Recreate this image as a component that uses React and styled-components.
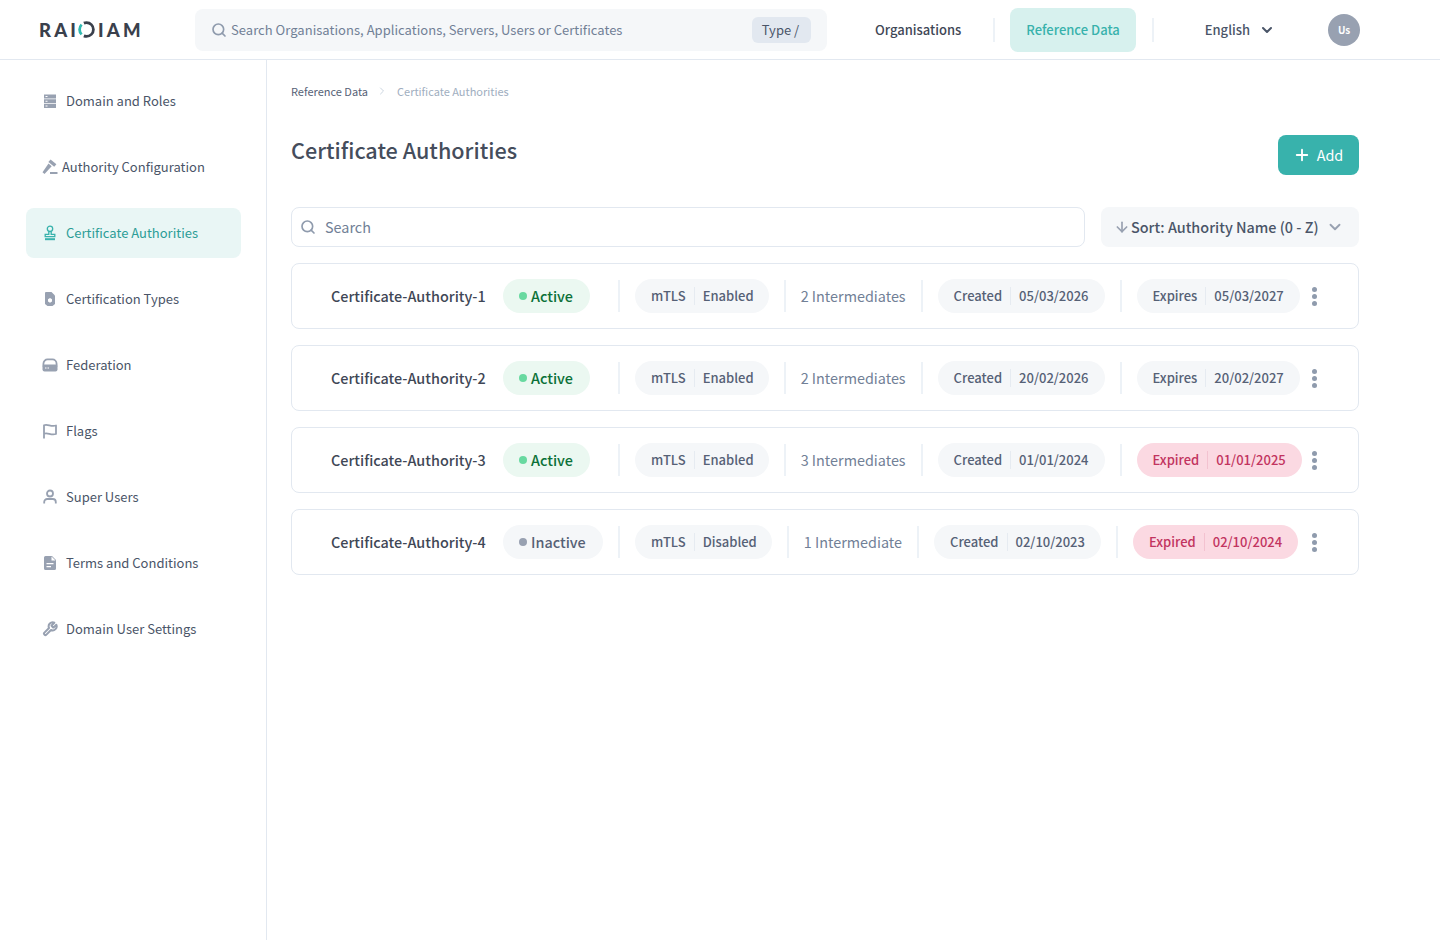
import React from 'react';
import styled, { createGlobalStyle } from 'styled-components';
import { FiSearch, FiChevronDown, FiChevronRight, FiPlus, FiArrowDown, FiTool } from 'react-icons/fi';

const GlobalStyle = createGlobalStyle`
  * { box-sizing: border-box; }
  body {
    margin: 0;
    background: #fff;
    font-family: "Noto Sans CJK SC", "Noto Sans", sans-serif;
    color: #4a5568;
  }
`;

const Page = styled.div`
  height: 940px;
  display: flex;
  flex-direction: column;
`;

const Header = styled.header`
  height: 60px;
  flex: none;
  display: flex;
  align-items: center;
  border-bottom: 1px solid #e2e8f0;
`;

const Logo = styled.div`
  width: 156px;
  margin-left: 39px;
  display: flex;
  align-items: center;
  font-family: Lato, sans-serif;
  font-weight: 900;
  font-size: 18.5px;
  letter-spacing: 3.15px;
  color: #3a404c;
`;

const LogoRing = styled.svg`
  width: 17px;
  height: 17px;
  margin: 0 3px 0 -1px;
`;

const TopSearch = styled.div`
  width: 632px;
  height: 42px;
  border-radius: 8px;
  background: #f5f7f9;
  display: flex;
  align-items: center;
  padding: 0 16px;
  color: #718096;
  font-size: 13px;
  svg { color: #8f9bad; margin-right: 4px; flex: none; }
`;

const TopSearchText = styled.span`
  flex: 1;
  letter-spacing: 0.03px;
`;

const TypeBadge = styled.span`
  height: 26px;
  width: 59px;
  border-radius: 6px;
  background: #e2e8f0;
  display: flex;
  align-items: center;
  justify-content: center;
  padding-right: 2px;
  color: #4a5568;
`;

const TopLink = styled.div`
  height: 44px;
  display: flex;
  align-items: center;
  padding: 0 16px;
  margin-left: ${({ $first }) => ($first ? '32px' : '0')};
  border-radius: 8px;
  font-size: 13px;
  font-weight: 500;
  color: ${({ $active }) => ($active ? '#38b2ac' : '#3f4756')};
  background: ${({ $active }) => ($active ? '#d7f1ee' : 'transparent')};
`;

const TopDivider = styled.div`
  width: 2px;
  height: 24px;
  margin: 0 15px 0 16px;
  background: #edf2f7;
`;

const Language = styled.div`
  margin-left: 36px;
  display: flex;
  align-items: center;
  gap: 9px;
  font-size: 13px;
  font-weight: 500;
  color: #4a5568;
`;

const Avatar = styled.div`
  width: 32px;
  height: 32px;
  margin-left: 53px;
  border-radius: 50%;
  background: #98a1b1;
  color: #fff;
  font-size: 10px;
  font-weight: 700;
  display: flex;
  align-items: center;
  justify-content: center;
`;

const Body = styled.div`
  flex: 1;
  display: flex;
`;

const Sidebar = styled.nav`
  width: 267px;
  flex: none;
  border-right: 1px solid #e2e8f0;
  padding: 16px 25px 0 26px;
  display: flex;
  flex-direction: column;
  gap: 16px;
`;

const NavItem = styled.div`
  height: 50px;
  border-radius: 8px;
  padding: 0 0 1px 16px;
  display: flex;
  align-items: center;
  gap: ${({ $tight }) => ($tight ? '4px' : '8px')};
  font-size: 13px;
  color: ${({ $active }) => ($active ? '#2c9d97' : '#4a5568')};
  background: ${({ $active }) => ($active ? '#e9f6f5' : 'transparent')};
  svg {
    flex: none;
    width: 16px;
    height: 16px;
    color: ${({ $active }) => ($active ? '#38b2ac' : '#98a1b1')};
  }
`;

const Main = styled.main`
  flex: 1;
  padding: 24px 81px 0 24px;
  min-width: 0;
`;

const Breadcrumb = styled.div`
  height: 16px;
  display: flex;
  align-items: center;
  font-size: 11px;
  color: #566176;
  padding-bottom: 3px;
  svg { color: #cbd5e0; margin: 0 9px 0 8px; }
`;

const Crumb = styled.span`
  color: #a0aec0;
`;

const TitleRow = styled.div`
  display: flex;
  justify-content: space-between;
  align-items: flex-start;
  margin-top: 35px;
`;

const Title = styled.h1`
  margin: 0;
  font-size: 21.6px;
  line-height: 30px;
  font-weight: 500;
  color: #454d5c;
`;

const AddButton = styled.button`
  width: 81px;
  height: 40px;
  padding: 0 1px 1px 0;
  border: 0;
  border-radius: 8px;
  background: #38b2ac;
  color: #fff;
  font: inherit;
  font-size: 14.4px;
  display: flex;
  align-items: center;
  justify-content: center;
  gap: 6px;
`;

const Toolbar = styled.div`
  display: flex;
  gap: 16px;
  margin-top: 32px;
`;

const SearchBox = styled.div`
  flex: 1;
  height: 40px;
  border: 1px solid #e2e8f0;
  border-radius: 8px;
  display: flex;
  align-items: center;
  gap: 9px;
  padding: 0 0 1px 8px;
  font-size: 14.4px;
  color: #718096;
  svg { color: #8f9bad; }
`;

const SortBox = styled.div`
  width: 258px;
  height: 40px;
  border-radius: 8px;
  background: #f5f7f9;
  display: flex;
  align-items: center;
  padding: 0 15px 1px 13px;
  gap: 1px;
  font-size: 14.4px;
  font-weight: 500;
  color: #4a5568;
  svg { color: #98a1b1; flex: none; }
`;

const SortLabel = styled.span`
  flex: 1;
  white-space: nowrap;
`;

const List = styled.div`
  margin-top: 16px;
  display: flex;
  flex-direction: column;
  gap: 16px;
`;

const Card = styled.div`
  height: 66px;
  border: 1px solid #e2e8f0;
  border-radius: 8px;
  padding: 0 41px 0 39px;
  display: flex;
  align-items: center;
`;

const Name = styled.div`
  width: 172px;
  flex: none;
  padding-bottom: 2px;
  font-size: 14.4px;
  font-weight: 500;
  color: #3f4756;
  white-space: nowrap;
`;

const StatusCell = styled.div`
  width: 100px;
  flex: none;
  display: flex;
`;

const StatusPill = styled.div`
  height: 34px;
  border-radius: 17px;
  padding: 0 17px 2px 16px;
  display: flex;
  align-items: center;
  gap: 4px;
  font-size: 14.4px;
  font-weight: 500;
  color: ${({ $on }) => ($on ? '#0b7138' : '#566176')};
  background: ${({ $on }) => ($on ? '#ebf8f1' : '#f5f7f9')};
`;

const Dot = styled.span`
  width: 8px;
  height: 8px;
  margin-top: 2px;
  border-radius: 50%;
  background: ${({ $on }) => ($on ? '#68d9a0' : '#98a1b1')};
`;

const Divider = styled.div`
  width: 2px;
  height: 32px;
  flex: none;
  background: #edf2f7;
  margin: 0 15px;
`;

const Pill = styled.div`
  height: 34px;
  border-radius: 17px;
  padding: 0 ${({ $compact }) => ($compact ? '15px' : '16px')} 2px 16px;
  display: flex;
  align-items: center;
  font-size: 13px;
  font-weight: 500;
  white-space: nowrap;
  color: ${({ $danger }) => ($danger ? '#c2345f' : '#566176')};
  background: ${({ $danger }) => ($danger ? '#fbd9e2' : '#f5f7f9')};
`;

const PillSep = styled.span`
  width: 1px;
  height: 18px;
  margin: 2px 8px 0;
  background: ${({ $danger }) => ($danger ? '#f3c2d0' : '#e6ebf1')};
`;

const Intermediates = styled.div`
  padding-bottom: 2px;
  font-size: 14.4px;
  color: #718096;
  white-space: nowrap;
`;

const Kebab = styled.div`
  margin-left: auto;
  width: 5px;
  flex: none;
  display: flex;
  flex-direction: column;
  gap: 2px;
  span {
    width: 5px;
    height: 5px;
    border-radius: 50%;
    background: #8f9bad;
  }
`;

const StorageIcon = () => (
  <svg viewBox="0 0 16 16">
    <path fill="currentColor" d="M2 1.500h12v4H2zM2 6.200h12v4H2zM2 10.900h12v4H2z" />
    <path fill="#fff" d="M3.500 3h2v1h-2zM3.500 7.700h2v1h-2zM3.500 12.400h2v1h-2z" />
  </svg>
);

const GavelIcon = () => (
  <svg viewBox="0 0 16 16" fill="currentColor">
    <path d="M8.600 .5l5.800 4.700-2.200 2.600-5.800-4.700z" />
    <path d="M6.500 4.500l3.200 2.800-7.200 7.700-2-1.800z" />
    <path d="M8 13h7.500v2H8z" />
  </svg>
);

const StampIcon = () => (
  <svg viewBox="0 0 16 16" fill="none" stroke="currentColor" strokeWidth="1.300">
    <circle cx="8" cy="3.800" r="2.700" />
    <path d="M6.800 6.500v2.900H3.200v2.300h9.600V9.400H9.200V6.500" />
    <path d="M3 14.200h10" strokeWidth="2" />
  </svg>
);

const CertIcon = () => (
  <svg viewBox="0 0 16 16" fill="currentColor">
    <path d="M4 1h5.500L13 4.500V13l-2.500 2h-5L3 13V2a1 1 0 0 1 1-1z" />
    <path fill="#fff" d="M8 7l2 1.200v2.300L8 11.700l-2-1.200V8.200z" />
  </svg>
);

const DriveIcon = () => (
  <svg viewBox="0 0 16 16">
    <path fill="none" stroke="currentColor" strokeWidth="1.800" d="M1.400 9.500V7C1.400 4 3.500 2.400 5.500 2.400h5c2 0 4.100 1.600 4.100 4.600v2.500" />
    <rect x=".5" y="7.500" width="15" height="7" rx="2" fill="currentColor" />
    <path fill="#fff" d="M3 10.500h1.500v1H3zM5.500 10.500H7v1H5.500z" />
  </svg>
);

const FlagIcon = () => (
  <svg viewBox="0 0 16 16" fill="none" stroke="currentColor" strokeWidth="1.800">
    <path d="M2 15.500V2.300c3.500-1.800 7 2 12 .2v8.500c-5 1.800-8.500-2-12-.2" strokeLinejoin="round" />
  </svg>
);

const UserIcon = () => (
  <svg viewBox="0 0 16 16" fill="none" stroke="currentColor" strokeWidth="1.800">
    <circle cx="8" cy="4.500" r="3" />
    <path d="M2.200 14.500v-1.500A3 3 0 0 1 5.200 10h5.600a3 3 0 0 1 3 3v1.500" />
  </svg>
);

const DocIcon = () => (
  <svg viewBox="0 0 16 16">
    <path fill="currentColor" d="M3.500 1H10l4 4v8.500a1.500 1.500 0 0 1-1.500 1.500h-9A1.500 1.500 0 0 1 2 13.500v-11A1.500 1.500 0 0 1 3.500 1z" />
    <path fill="#fff" d="M9.500 1.500v4h4zM4.500 8h7v1.300h-7zM4.500 11h4.500v1.300H4.500z" />
  </svg>
);

const navItems = [
  { label: 'Domain and Roles', icon: <StorageIcon /> },
  { label: 'Authority Configuration', icon: <GavelIcon />, tight: true },
  { label: 'Certificate Authorities', icon: <StampIcon />, active: true },
  { label: 'Certification Types', icon: <CertIcon /> },
  { label: 'Federation', icon: <DriveIcon /> },
  { label: 'Flags', icon: <FlagIcon /> },
  { label: 'Super Users', icon: <UserIcon /> },
  { label: 'Terms and Conditions', icon: <DocIcon /> },
  { label: 'Domain User Settings', icon: <FiTool strokeWidth={3} /> },
];

const authorities = [
  { name: 'Certificate-Authority-1', active: true, mtls: 'Enabled', inter: '2 Intermediates', created: '05/03/2026', expLabel: 'Expires', expires: '05/03/2027' },
  { name: 'Certificate-Authority-2', active: true, mtls: 'Enabled', inter: '2 Intermediates', created: '20/02/2026', expLabel: 'Expires', expires: '20/02/2027' },
  { name: 'Certificate-Authority-3', active: true, mtls: 'Enabled', inter: '3 Intermediates', created: '01/01/2024', expLabel: 'Expired', expires: '01/01/2025', expired: true },
  { name: 'Certificate-Authority-4', active: false, mtls: 'Disabled', inter: '1 Intermediate', created: '02/10/2023', expLabel: 'Expired', expires: '02/10/2024', expired: true },
];

export default function App() {
  return (
    <Page>
      <GlobalStyle />
      <Header>
        <Logo>
          RAI
          <LogoRing viewBox="0 0 16 16" fill="none" strokeWidth="2.600">
            <path d="M5.500 2A6.500 6.500 0 0 1 8 1.500a6.500 6.500 0 0 1 0 13 6.500 6.500 0 0 1-2.500-.5" stroke="#3a404c" />
            <path d="M3.400 3.400a6.500 6.500 0 0 0 0 9.200" stroke="#2fb8b0" />
          </LogoRing>
          IAM
        </Logo>
        <TopSearch>
          <FiSearch size={16} strokeWidth={2.5} />
          <TopSearchText>Search Organisations, Applications, Servers, Users or Certificates</TopSearchText>
          <TypeBadge>Type /</TypeBadge>
        </TopSearch>
        <TopLink $first>Organisations</TopLink>
        <TopDivider />
        <TopLink $active>Reference Data</TopLink>
        <TopDivider />
        <Language>
          English
          <FiChevronDown size={16} strokeWidth={3} />
        </Language>
        <Avatar>Us</Avatar>
      </Header>
      <Body>
        <Sidebar>
          {navItems.map((item) => (
            <NavItem key={item.label} $active={item.active} $tight={item.tight}>
              {item.icon}
              {item.label}
            </NavItem>
          ))}
        </Sidebar>
        <Main>
          <Breadcrumb>
            Reference Data
            <FiChevronRight size={12} />
            <Crumb>Certificate Authorities</Crumb>
          </Breadcrumb>
          <TitleRow>
            <Title>Certificate Authorities</Title>
            <AddButton>
              <FiPlus size={18} strokeWidth={2.5} />
              Add
            </AddButton>
          </TitleRow>
          <Toolbar>
            <SearchBox>
              <FiSearch size={16} strokeWidth={2.5} />
              Search
            </SearchBox>
            <SortBox>
              <FiArrowDown size={16} strokeWidth={2.5} />
              <SortLabel>Sort: Authority Name (0 - Z)</SortLabel>
              <FiChevronDown size={18} strokeWidth={2.5} />
            </SortBox>
          </Toolbar>
          <List>
            {authorities.map((ca) => (
              <Card key={ca.name}>
                <Name>{ca.name}</Name>
                <StatusCell>
                  <StatusPill $on={ca.active}>
                    <Dot $on={ca.active} />
                    {ca.active ? 'Active' : 'Inactive'}
                  </StatusPill>
                </StatusCell>
                <Divider />
                <Pill $compact>mTLS<PillSep />{ca.mtls}</Pill>
                <Divider />
                <Intermediates>{ca.inter}</Intermediates>
                <Divider />
                <Pill>Created<PillSep />{ca.created}</Pill>
                <Divider />
                <Pill $danger={ca.expired}>{ca.expLabel}<PillSep $danger={ca.expired} />{ca.expires}</Pill>
                <Kebab><span /><span /><span /></Kebab>
              </Card>
            ))}
          </List>
        </Main>
      </Body>
    </Page>
  );
}
